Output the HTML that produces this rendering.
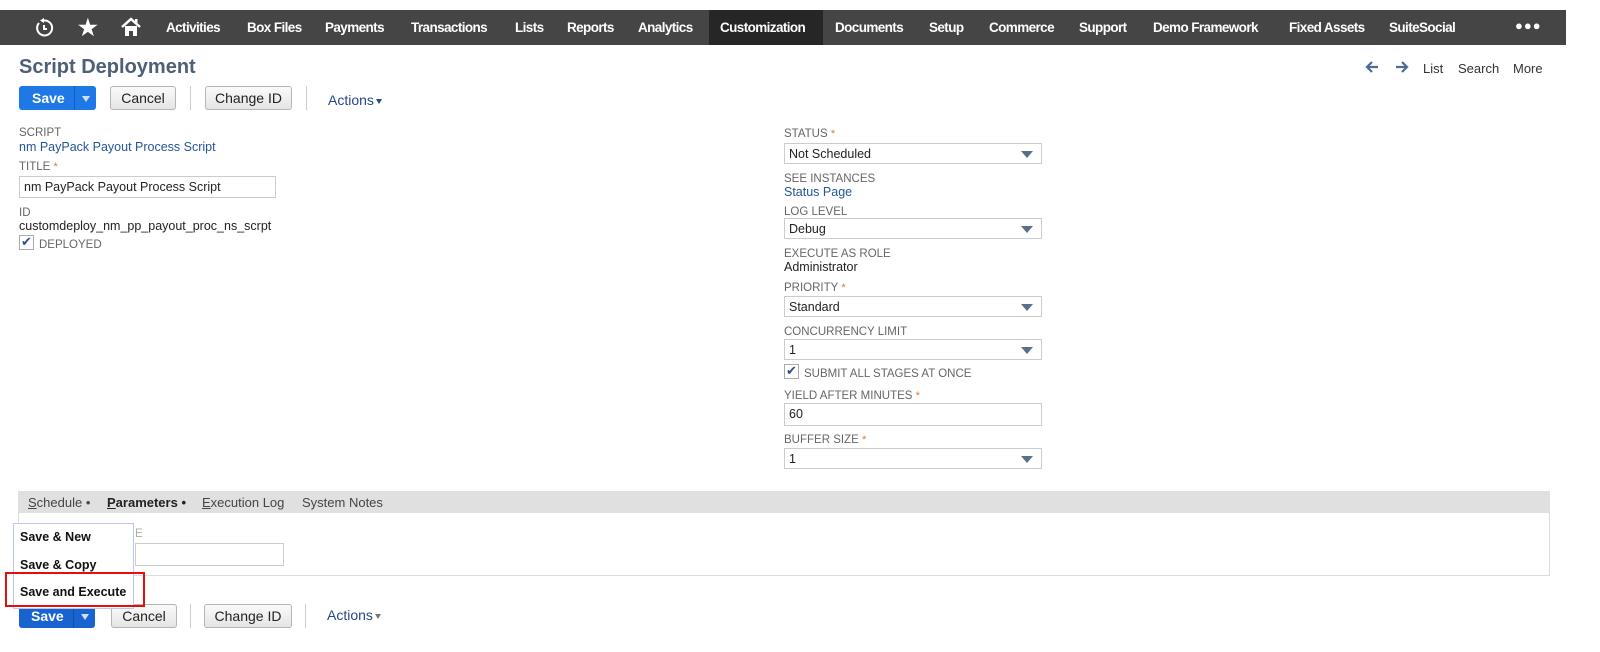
<!DOCTYPE html>
<html><head><meta charset="utf-8"><style>
body{margin:0;width:1600px;height:652px;background:#fff;position:relative;overflow:hidden;font-family:"Liberation Sans",Arial,sans-serif;}
.a{position:absolute;white-space:nowrap}
.nav{position:absolute;left:0;top:10px;width:1566px;height:35px;background:#454545;}
.ni{position:absolute;top:10px;color:#fff;font-weight:bold;font-size:13.5px;letter-spacing:-0.6px}
.lbl{font-size:11.5px;color:#666;}
.star{color:#e0792b;font-size:11px}
.val{font-size:12.5px;color:#222}
.lnk{font-size:12.5px;color:#255599}
.inp{position:absolute;height:21px;border:1px solid #ccc;background:#fff;font-size:12.5px;line-height:21px;padding-left:4px;box-sizing:border-box;color:#222}
.sel{position:absolute;height:21px;border:1px solid #ccc;background:#fff;font-size:12.5px;line-height:21px;padding-left:4px;box-sizing:border-box;color:#222}
.sel:after{content:"";position:absolute;right:8px;top:7px;border-left:6px solid transparent;border-right:6px solid transparent;border-top:7px solid #5a6f8a}
.btn{position:absolute;height:24px;border:1px solid #b5b5b5;border-radius:3px;background:linear-gradient(#fafafa,#e5e5e5);font-size:14px;line-height:23px;text-align:center;box-sizing:border-box;color:#222}
.save{position:absolute;height:24px;background:#1e78e6;border-radius:3px;color:#fff;font-weight:bold;font-size:14px;line-height:24px;}
.dd{position:absolute;left:55px;top:0;width:22px;height:24px;border-left:1px solid #155fb8}
.dd:after{content:"";position:absolute;left:7px;top:10px;border-left:4px solid transparent;border-right:4px solid transparent;border-top:6px solid #cfe0ff}
.sep{position:absolute;width:1px;height:24px;background:#ccc}
.cb{position:absolute;width:13px;height:13px;border:1px solid #aaa;background:#fff;font-size:13px;line-height:12px;color:#2a4f8a;text-align:center}
.tri{display:inline-block;border-left:3.5px solid transparent;border-right:3.5px solid transparent;border-top:5px solid #24478a;vertical-align:middle;margin-left:2px}
</style></head><body>
<div class="nav">
<div style="position:absolute;left:709px;top:0;width:114px;height:35px;background:#262626"></div>
<svg class="a" style="left:34px;top:8px" width="20" height="20" viewBox="0 0 20 20"><path d="M5 5 A7.5 7.5 0 1 0 10 2.5" fill="none" stroke="#fff" stroke-width="2"/><path d="M10 0 L10 5 L6 2.5z" fill="#fff"/><path d="M10 7 V11 H13" fill="none" stroke="#fff" stroke-width="2"/></svg>
<div class="ni" style="left:78px;top:5px;font-size:22px">★</div>
<svg class="a" style="left:120px;top:6px" width="22" height="22" viewBox="0 0 22 22"><path d="M2 11 L11 3 L20 11" fill="none" stroke="#fff" stroke-width="2.5"/><path d="M5 10 V20 H9 V15 H13 V20 H17 V10" fill="#fff"/><rect x="15" y="3" width="2.5" height="5" fill="#fff"/></svg>
<div class="ni" style="left:166px">Activities</div>
<div class="ni" style="left:247px">Box Files</div>
<div class="ni" style="left:325px">Payments</div>
<div class="ni" style="left:411px">Transactions</div>
<div class="ni" style="left:515px">Lists</div>
<div class="ni" style="left:567px">Reports</div>
<div class="ni" style="left:638px">Analytics</div>
<div class="ni" style="left:720px">Customization</div>
<div class="ni" style="left:835px">Documents</div>
<div class="ni" style="left:929px">Setup</div>
<div class="ni" style="left:989px">Commerce</div>
<div class="ni" style="left:1079px">Support</div>
<div class="ni" style="left:1153px">Demo Framework</div>
<div class="ni" style="left:1289px">Fixed Assets</div>
<div class="ni" style="left:1389px">SuiteSocial</div>
<div class="ni" style="left:1515px;top:8px;font-size:13px;letter-spacing:1px">●●●</div>
</div>
<div class="a" style="left:19px;top:56px;font-size:20px;font-weight:bold;color:#4d5f79">Script Deployment</div>
<svg class="a" style="left:1365px;top:61px" width="14" height="12" viewBox="0 0 14 12"><path d="M13 6H3M7 1L2 6l5 5" fill="none" stroke="#4d6b94" stroke-width="2.2"/></svg>
<svg class="a" style="left:1395px;top:61px" width="14" height="12" viewBox="0 0 14 12"><path d="M1 6h10M7 1l5 5-5 5" fill="none" stroke="#4d6b94" stroke-width="2.2"/></svg>
<div class="a" style="left:1423px;top:61px;font-size:13px;color:#333">List</div>
<div class="a" style="left:1458px;top:61px;font-size:13px;color:#333">Search</div>
<div class="a" style="left:1513px;top:61px;font-size:13px;color:#333">More</div>

<div class="save" style="left:19px;top:86px;width:77px"><span style="position:absolute;left:13px">Save</span><span class="dd"></span></div>
<div class="btn" style="left:110px;top:86px;width:66px">Cancel</div>
<div class="sep" style="left:190px;top:86px"></div>
<div class="btn" style="left:205px;top:86px;width:87px">Change ID</div>
<div class="sep" style="left:306px;top:86px"></div>
<div class="a" style="left:328px;top:92px;font-size:14px;color:#24478a">Actions<span class="tri"></span></div>

<div class="a lbl" style="left:19px;top:127px">SCRIPT</div>
<div class="a lnk" style="left:19px;top:140px">nm PayPack Payout Process Script</div>
<div class="a lbl" style="left:19px;top:161px">TITLE <span class="star">*</span></div>
<div class="inp" style="left:19px;top:176px;width:257px;height:22px">nm PayPack Payout Process Script</div>
<div class="a lbl" style="left:19px;top:207px">ID</div>
<div class="a val" style="left:19px;top:219px">customdeploy_nm_pp_payout_proc_ns_scrpt</div>
<div class="cb" style="left:19px;top:235px">✔</div>
<div class="a lbl" style="left:39px;top:239px">DEPLOYED</div>

<div class="a lbl" style="left:784px;top:128px">STATUS <span class="star">*</span></div>
<div class="sel" style="left:784px;top:143px;width:258px">Not Scheduled</div>
<div class="a lbl" style="left:784px;top:173px">SEE INSTANCES</div>
<div class="a lnk" style="left:784px;top:185px">Status Page</div>
<div class="a lbl" style="left:784px;top:206px">LOG LEVEL</div>
<div class="sel" style="left:784px;top:218px;width:258px">Debug</div>
<div class="a lbl" style="left:784px;top:248px">EXECUTE AS ROLE</div>
<div class="a val" style="left:784px;top:260px">Administrator</div>
<div class="a lbl" style="left:784px;top:282px">PRIORITY <span class="star">*</span></div>
<div class="sel" style="left:784px;top:296px;width:258px">Standard</div>
<div class="a lbl" style="left:784px;top:326px">CONCURRENCY LIMIT</div>
<div class="sel" style="left:784px;top:339px;width:258px">1</div>
<div class="cb" style="left:784px;top:364px">✔</div>
<div class="a lbl" style="left:804px;top:368px">SUBMIT ALL STAGES AT ONCE</div>
<div class="a lbl" style="left:784px;top:390px">YIELD AFTER MINUTES <span class="star">*</span></div>
<div class="inp" style="left:784px;top:403px;width:258px;height:23px">60</div>
<div class="a lbl" style="left:784px;top:434px">BUFFER SIZE <span class="star">*</span></div>
<div class="sel" style="left:784px;top:448px;width:258px">1</div>

<div class="a" style="left:18px;top:491px;width:1532px;height:85px;border:1px solid #ddd;border-top:none;box-sizing:border-box"></div>
<div class="a" style="left:18px;top:491px;width:1532px;height:22px;background:#e0e0e0"></div>
<div class="a" style="left:28px;top:495px;font-size:13px;color:#444"><u>S</u>chedule •</div>
<div class="a" style="left:107px;top:495px;font-size:13px;color:#222;font-weight:bold"><u>P</u>arameters •</div>
<div class="a" style="left:202px;top:495px;font-size:13px;color:#444"><u>E</u>xecution Log</div>
<div class="a" style="left:302px;top:495px;font-size:13px;color:#444">System Notes</div>
<div class="a" style="left:135px;top:543px;width:149px;height:23px;border:1px solid #ccc;box-sizing:border-box"></div>
<div class="a lbl" style="left:135px;top:528px;color:#aaa">E</div>

<div class="save" style="left:19px;top:604px;width:76px;background:#1763cf"><span style="position:absolute;left:12px">Save</span><span class="dd" style="left:54px;border-left-color:#0f4fa8"></span></div>
<div class="btn" style="left:111px;top:604px;width:66px">Cancel</div>
<div class="sep" style="left:190px;top:604px"></div>
<div class="btn" style="left:204px;top:604px;width:88px">Change ID</div>
<div class="sep" style="left:305px;top:604px"></div>
<div class="a" style="left:327px;top:607px;font-size:14px;color:#24478a">Actions<span class="tri" style="border-top-color:#777"></span></div>

<div class="a" style="left:13px;top:523px;width:121px;height:86px;border:1px solid #b8c8ee;background:#fff;box-sizing:border-box"></div>
<div class="a" style="left:20px;top:530px;font-size:12.5px;font-weight:bold;color:#111">Save &amp; New</div>
<div class="a" style="left:20px;top:558px;font-size:12.5px;font-weight:bold;color:#111">Save &amp; Copy</div>
<div class="a" style="left:20px;top:585px;font-size:12.5px;font-weight:bold;color:#111">Save and Execute</div>
<div class="a" style="left:5px;top:572px;width:140px;height:35px;border:2px solid #e01010;box-sizing:border-box"></div>
</body></html>
